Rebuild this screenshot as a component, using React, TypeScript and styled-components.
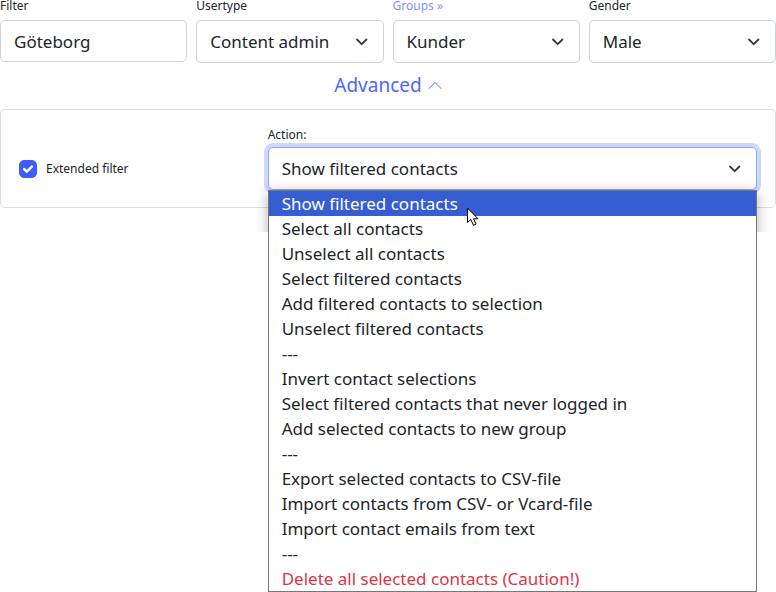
import React, { useState } from "react";
import styled, { createGlobalStyle, css } from "styled-components";

const GlobalStyle = createGlobalStyle`
  *, *::before, *::after { box-sizing: border-box; }
  body {
    margin: 0;
    background: #fff;
    color: #212529;
    font-family: "Noto Sans", "Open Sans", sans-serif;
    font-size: 17px;
  }
`;

const Page = styled.main`
  display: flex;
  flex-direction: column;
  min-height: 100vh;
`;

const Filters = styled.form`
  display: grid;
  grid-template-columns: repeat(4, minmax(0, 1fr));
  gap: 9px;
  align-items: start;
`;

const Field = styled.div`
  display: flex;
  flex-direction: column;
  min-width: 0;
`;

const labelText = css`
  font-size: 12px;
  line-height: 12px;
  margin-bottom: 8px;
`;

const Label = styled.label<{ $tight?: boolean }>`
  ${labelText}
  ${(p) => p.$tight && "margin-bottom: 6px;"}
`;

const GroupsLabel = styled.a`
  ${labelText}
  color: #7f93ff;
  text-decoration: none;
`;

const control = css`
  width: 100%;
  border: 1px solid #ced4da;
  border-radius: 5px;
  background: #fff;
  color: inherit;
  font: inherit;
  padding: 0 13px;
  outline: none;
`;

const TextInput = styled.input`
  ${control}
  height: 42px;
`;

const SelectBox = styled.div`
  position: relative;
`;

const Select = styled.select<{ $focused?: boolean }>`
  ${control}
  display: block;
  height: 43px;
  appearance: none;
  ${(p) =>
    p.$focused &&
    css`
      border-color: #8ea9fb;
      box-shadow: 0 0 0 4px #cfd7ff;
    `}
`;

const SelectArrow = styled.svg`
  position: absolute;
  top: 50%;
  right: 16px;
  width: 12px;
  height: 12px;
  margin-top: -6px;
  pointer-events: none;
`;

const AdvancedToggle = styled.button`
  align-self: center;
  display: flex;
  align-items: center;
  gap: 6px;
  height: 46px;
  padding: 0 0 2px;
  border: 0;
  background: none;
  color: #4c66ff;
  font: inherit;
  font-size: 19px;
  cursor: pointer;
`;

const Panel = styled.section`
  display: grid;
  grid-template-columns: 1fr 2fr;
  gap: 4px;
  padding: 19px 18px 17px;
  border: 1px solid #dcdddf;
  border-radius: 5px;
`;

const CheckLabel = styled.label`
  display: flex;
  align-items: center;
  align-self: center;
  gap: 9px;
  padding-top: 18px;
  font-size: 12px;
`;

const Checkbox = styled.input`
  appearance: none;
  width: 18px;
  height: 18px;
  margin: 0;
  border: 1px solid #adb5bd;
  border-radius: 5px;
  &:checked {
    border-color: #3d5eff;
    background: #3d5eff
      url("data:image/svg+xml,%3Csvg xmlns='http://www.w3.org/2000/svg' viewBox='0 0 16 16'%3E%3Cpath d='M4.2 8.2l2.6 2.4L11.8 5.6' fill='none' stroke='white' stroke-width='2.5' stroke-linecap='round' stroke-linejoin='round'/%3E%3C/svg%3E")
      center / 16px 16px no-repeat;
  }
`;

const Menu = styled.ul`
  position: absolute;
  z-index: 1;
  top: 100%;
  left: 0;
  right: 0;
  margin: 0;
  padding: 0;
  list-style: none;
  border: 1px solid #767676;
  background: #fff;
  &::before {
    content: "";
    position: absolute;
    z-index: -1;
    inset: -1px;
    box-shadow: 0 3px 12px rgba(0, 0, 0, 0.3);
    clip-path: inset(-20px -20px 360px -20px);
    pointer-events: none;
  }
`;

const Option = styled.li<{ $danger?: boolean }>`
  height: 25px;
  padding: 0 13px;
  line-height: 25px;
  white-space: nowrap;
  color: ${(p) => (p.$danger ? "#dc3545" : "inherit")};
  cursor: default;
  &[aria-selected="true"] {
    background: #375dd2;
    color: #fff;
  }
`;

const Pointer = styled.svg`
  position: absolute;
  z-index: 2;
  top: 60px;
  left: 199px;
  width: 13px;
  height: 20px;
  pointer-events: none;
`;

const actions = [
  "Show filtered contacts",
  "Select all contacts",
  "Unselect all contacts",
  "Select filtered contacts",
  "Add filtered contacts to selection",
  "Unselect filtered contacts",
  "---",
  "Invert contact selections",
  "Select filtered contacts that never logged in",
  "Add selected contacts to new group",
  "---",
  "Export selected contacts to CSV-file",
  "Import contacts from CSV- or Vcard-file",
  "Import contact emails from text",
  "---",
  "Delete all selected contacts (Caution!)",
];

const Arrow = () => (
  <SelectArrow viewBox="0 0 12 12" aria-hidden="true">
    <path d="M1 3.5l4.7 4.7 4.7-4.7" fill="none" stroke="#343a40" strokeWidth="1.8" strokeLinecap="round" strokeLinejoin="round" />
  </SelectArrow>
);

function FilterSelect({ id, value }: { id: string; value: string }) {
  return (
    <SelectBox>
      <Select id={id} defaultValue={value}>
        <option>{value}</option>
      </Select>
      <Arrow />
    </SelectBox>
  );
}

export default function App() {
  const [action, setAction] = useState(0);
  return (
    <>
      <GlobalStyle />
      <Page>
        <Filters>
          <Field>
            <Label htmlFor="filter">Filter</Label>
            <TextInput id="filter" type="text" defaultValue="Göteborg" />
          </Field>
          <Field>
            <Label htmlFor="usertype">Usertype</Label>
            <FilterSelect id="usertype" value="Content admin" />
          </Field>
          <Field>
            <GroupsLabel href="#groups" id="groups-label">Groups »</GroupsLabel>
            <SelectBox>
              <Select aria-labelledby="groups-label" defaultValue="Kunder">
                <option>Kunder</option>
              </Select>
              <Arrow />
            </SelectBox>
          </Field>
          <Field>
            <Label htmlFor="gender">Gender</Label>
            <FilterSelect id="gender" value="Male" />
          </Field>
        </Filters>
        <AdvancedToggle type="button" aria-expanded="true">
          Advanced
          <svg width="14" height="14" viewBox="0 0 14 14" aria-hidden="true">
            <path d="M1 10.5l6-6 6 6" fill="none" stroke="currentColor" strokeLinecap="round" strokeLinejoin="round" />
          </svg>
        </AdvancedToggle>
        <Panel>
          <CheckLabel>
            <Checkbox type="checkbox" defaultChecked />
            Extended filter
          </CheckLabel>
          <Field>
            <Label htmlFor="action" $tight>Action:</Label>
            <SelectBox>
              <Select
                id="action"
                $focused
                value={action}
                onChange={(e) => setAction(Number(e.target.value))}
              >
                {actions.map((text, i) => (
                  <option key={i} value={i}>{text}</option>
                ))}
              </Select>
              <Arrow />
              <Menu role="listbox" aria-label="Action">
                {actions.map((text, i) => (
                  <Option
                    key={i}
                    role="option"
                    aria-selected={i === action}
                    $danger={i === actions.length - 1}
                    onClick={() => setAction(i)}
                  >
                    {text}
                  </Option>
                ))}
              </Menu>
              <Pointer viewBox="0 0 13 20" aria-hidden="true">
                <path d="M.5 1v14.5l3.3-3 2.7 5.8 2.6-1.2-2.6-5.3H11z" fill="#fff" stroke="#000" />
              </Pointer>
            </SelectBox>
          </Field>
        </Panel>
      </Page>
    </>
  );
}
